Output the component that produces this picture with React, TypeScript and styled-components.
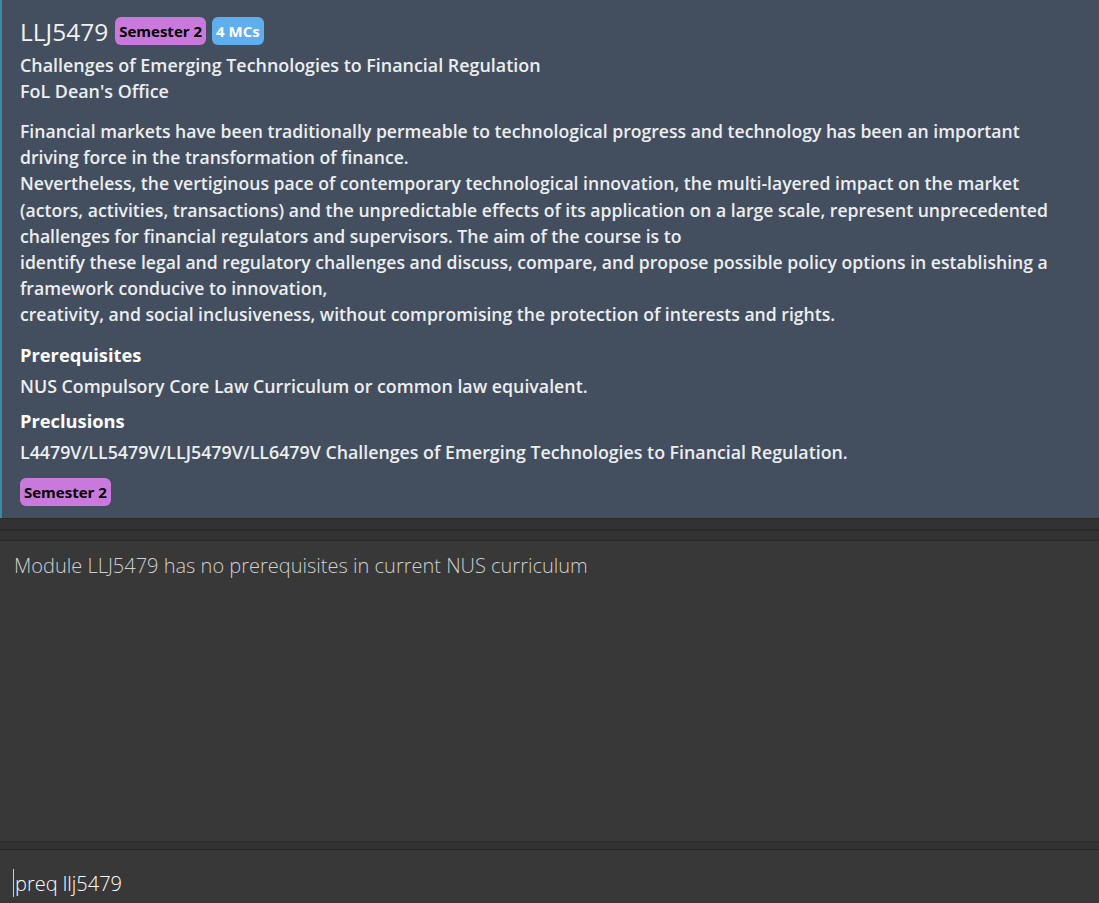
import React from "react";
import styled, { createGlobalStyle } from "styled-components";

const Global = createGlobalStyle`
  html, body { margin: 0; padding: 0; background: #383838; }
  body { font-family: "Open Sans", "Noto Sans", sans-serif; }
`;

const Page = styled.div`
  display: flex;
  flex-direction: column;
  height: 903px;
  width: 1099px;
  overflow: hidden;
  background: #383838;
`;

const Card = styled.section`
  box-sizing: border-box;
  height: 518px;
  background: #434e5f;
  border-left: 2px solid #3a8aa2;
  padding: 15px 20px 0 18px;
  color: #f0f0f0;
  display: flex;
  flex-direction: column;
`;

const HeaderRow = styled.div`
  display: flex;
  align-items: center;
  gap: 6px;
  height: 32px;
`;

const Code = styled.span`
  font-size: 24.5px;
  font-weight: 400;
  color: #f2f2f2;
  margin-right: 1px;
`;

const Badge = styled.span<{ $tone: "purple" | "blue" }>`
  display: inline-flex;
  align-items: center;
  height: 28px;
  padding: 0 4px;
  border-radius: 6px;
  font-size: 15px;
  font-weight: 700;
  background: ${(p) => (p.$tone === "purple" ? "#c879db" : "#5faeed")};
  color: ${(p) => (p.$tone === "purple" ? "#000" : "#fff")};
`;

const InfoLine = styled.div`
  font-size: 17.9px;
  font-weight: 600;
  line-height: 26px;
  color: #eceef0;
`;

const Description = styled.p`
  margin: 14px 0 0;
  font-size: 17.6px;
  font-weight: 600;
  line-height: 26.2px;
  white-space: pre-line;
  color: #eceef0;
`;

const SectionTitle = styled.h3`
  margin: 13px 0 0;
  font-size: 18.3px;
  font-weight: 700;
  line-height: 28px;
  color: #ffffff;
`;

const SectionText = styled.div`
  margin-top: 4px;
  font-size: 17.8px;
  font-weight: 600;
  line-height: 26px;
  color: #eceef0;
`;

const BottomBadges = styled.div`
  margin-top: 13px;
  display: flex;
`;

const Divider = styled.div<{ $h: number }>`
  height: ${(p) => p.$h}px;
  background: #323232;
  border-top: 1px solid #2a2a2a;
  border-bottom: 1px solid #262626;
  box-sizing: border-box;
  display: flex;
  flex-direction: column;
  justify-content: center;
`;

const DividerLine = styled.div`
  height: 2px;
  background: #2a2a2a;
`;

const ResultArea = styled.div`
  flex: 1;
  background: #383838;
  padding: 10px 14px;
  font-size: 20px;
  font-weight: 300;
  color: #cfcfcf;
  line-height: 30px;
`;

const CommandBox = styled.div`
  height: 53px;
  background: #383838;
  box-sizing: border-box;
  padding: 13px 13px 0;
  display: flex;
  align-items: center;
`;

const Caret = styled.span`
  display: inline-block;
  width: 1px;
  height: 28px;
  background: #d0d0d0;
  margin-right: 1px;
`;

const CommandText = styled.span`
  font-size: 20px;
  font-weight: 300;
  color: #ffffff;
`;

const description = `Financial markets have been traditionally permeable to technological progress and technology has been an important driving force in the transformation of finance.
Nevertheless, the vertiginous pace of contemporary technological innovation, the multi-layered impact on the market (actors, activities, transactions) and the unpredictable effects of its application on a large scale, represent unprecedented challenges for financial regulators and supervisors. The aim of the course is to
identify these legal and regulatory challenges and discuss, compare, and propose possible policy options in establishing a framework conducive to innovation,
creativity, and social inclusiveness, without compromising the protection of interests and rights.`;

export default function App() {
  return (
    <Page>
      <Global />
      <Card>
        <HeaderRow>
          <Code>LLJ5479</Code>
          <Badge $tone="purple">Semester 2</Badge>
          <Badge $tone="blue">4 MCs</Badge>
        </HeaderRow>
        <InfoLine style={{ marginTop: 5 }}>Challenges of Emerging Technologies to Financial Regulation</InfoLine>
        <InfoLine>FoL Dean's Office</InfoLine>
        <Description>{description}</Description>
        <SectionTitle>Prerequisites</SectionTitle>
        <SectionText>NUS Compulsory Core Law Curriculum or common law equivalent.</SectionText>
        <SectionTitle style={{ marginTop: 8 }}>Preclusions</SectionTitle>
        <SectionText>L4479V/LL5479V/LLJ5479V/LL6479V Challenges of Emerging Technologies to Financial Regulation.</SectionText>
        <BottomBadges>
          <Badge $tone="purple">Semester 2</Badge>
        </BottomBadges>
      </Card>
      <Divider $h={23}>
        <DividerLine />
      </Divider>
      <ResultArea>Module LLJ5479 has no prerequisites in current NUS curriculum</ResultArea>
      <Divider $h={9} />
      <CommandBox>
        <Caret />
        <CommandText>preq llj5479</CommandText>
      </CommandBox>
    </Page>
  );
}
